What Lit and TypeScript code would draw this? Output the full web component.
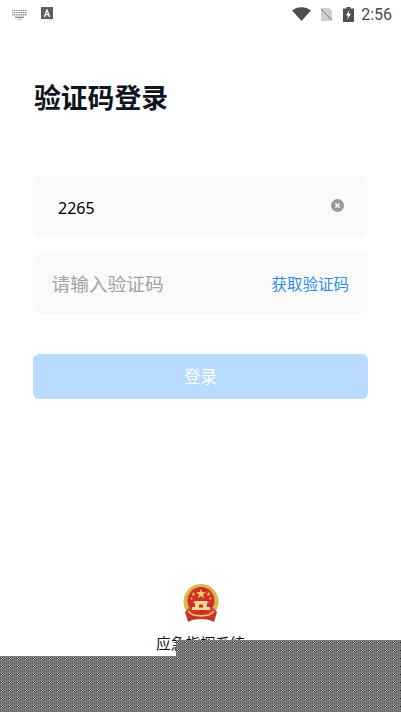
import { LitElement, html, css, svg } from "lit";
import { customElement } from "lit/decorators.js";

@customElement("app-root")
export class AppRoot extends LitElement {
  static styles = css`
    :host { display: block; width: 401px; height: 712px; position: relative; overflow: hidden; background: #fff; font-family: "Noto Sans CJK SC", "Noto Sans", sans-serif; }
    .status { height: 28px; display: flex; align-items: center; padding: 0 9px 0 11px; color: #555; }
    .status .left { display: flex; align-items: center; gap: 13px; flex: 1; }
    .status .right { display: flex; align-items: center; }
    .wifi { margin-right: 9px; }
    .sim { margin-right: 10px; }
    .batt { margin-right: 6px; }
    .time { font-family: Roboto, sans-serif; font-size: 16px; color: #4a4a4a; margin-left: 1px; }
    svg { display: block; }
    .main { padding: 50px 33px 0 33px; }
    h1 { margin: 0 0 0 1px; font-size: 26.8px; line-height: 38px; font-weight: 700; color: #0f1420; }
    .field { height: 61px; border-radius: 8px; background: #fafafa; display: flex; align-items: center; box-sizing: border-box; }
    .f1 { margin-top: 60px; padding: 0 24px 0 25px; justify-content: space-between; }
    .f2 { margin-top: 16px; padding: 0 19px 2px 19px; justify-content: space-between; }
    .value { font-family: "Noto Sans", sans-serif; font-size: 16px; color: #000; position: relative; top: 1px; }
    .clear { position: relative; top: -1px; }
    .ph { font-size: 18.7px; color: #a3a3a3; margin-left: -0.5px; }
    .link { font-size: 15.5px; color: #2b8ce8; }
    .btn { margin-top: 40px; height: 45px; padding-bottom: 2px; box-sizing: border-box; border-radius: 6px; background: #b8dbff; color: #fff; font-size: 16.5px; display: flex; align-items: center; justify-content: center; }
    .foot { position: absolute; left: 0; right: 0; top: 584px; display: flex; flex-direction: column; align-items: center; }
    .foot .name { margin-top: 8px; font-size: 14.8px; line-height: 22px; color: #111; }
    .noise { position: absolute; left: 0; top: 640px; }
  `;

  render() {
    return html`
      <div class="status">
        <div class="left">
          <svg width="17" height="11" viewBox="0 0 17 11">
            <g fill="none" stroke="#8c8c8c" stroke-width="1.2" stroke-dasharray="1.3 .5">
              <path d="M1 1.5 H16"/><path d="M1 3.7 H16"/><path d="M1 5.9 H16"/>
            </g>
            <path d="M4 8.3 H13" stroke="#8c8c8c" stroke-width="1.4"/>
            <path d="M6 10.3 H11" stroke="#b5b5b5" stroke-width="1"/>
          </svg>
          <svg width="12" height="14" viewBox="0 0 12 14"><rect width="12" height="12" fill="#5e5e5e"/><path d="M2.8 10 L5.3 2.6 H6.7 L9.2 10 H7.8 L7.3 8.3 H4.7 L4.2 10 Z M5.2 7.1 H6.8 L6 4.6 Z" fill="#fff" fill-rule="evenodd"/><path d="M6 13 H11" stroke="#aaa" stroke-width="1" stroke-dasharray="1 1"/></svg>
        </div>
        <div class="right">
          <svg class="wifi" width="19" height="14" viewBox="0 0 19 14"><path d="M0 3.5 C5 -1 14 -1 19 3.5 L9.5 14 Z" fill="#4f4f4f"/></svg>
          <svg class="sim" width="13" height="14" viewBox="0 0 13 14"><path d="M1 1 H9 L12 4 V14 H1 Z" fill="#cfcfcf"/><path d="M0 1 L13 13.5" stroke="#fff" stroke-width="1.4"/><path d="M1 2 L12 13" stroke="#8f8f8f" stroke-width="1.2"/></svg>
          <svg class="batt" width="11" height="15" viewBox="0 0 11 15"><path d="M3.5 0 H7.5 V1.5 H11 V15 H0 V1.5 H3.5 Z" fill="#4f4f4f"/><path d="M6.3 3 L3 8.5 H5 L4.4 12.5 L8 6.8 H5.8 Z" fill="#fff"/></svg>
          <span class="time">2:56</span>
        </div>
      </div>
      <div class="main">
        <h1>验证码登录</h1>
        <div class="field f1">
          <span class="value">2265</span>
          <svg class="clear" width="13" height="13" viewBox="0 0 13 13"><circle cx="6.5" cy="6.5" r="6.5" fill="#999"/><path d="M4.3 4.3 L8.7 8.7 M8.7 4.3 L4.3 8.7" stroke="#fff" stroke-width="1.3"/></svg>
        </div>
        <div class="field f2">
          <span class="ph">请输入验证码</span>
          <span class="link">获取验证码</span>
        </div>
        <div class="btn">登录</div>
      </div>
      <div class="foot">
        <svg width="36" height="40" viewBox="0 0 36 40">
          <ellipse cx="18" cy="17.5" rx="17.5" ry="17.5" fill="#d8b94f"/>
          <circle cx="18" cy="16.5" r="13.5" fill="#cf2f26"/>
          <path d="M2 28 L6 24 C11 31 25 31 30 24 L34 28 L31 38 C25 34 11 34 5 38 Z" fill="#c9332b"/>
          <path d="M5 27 C10 33.5 26 33.5 31 27" stroke="#eccb5e" stroke-width="1.6" fill="none"/>
          <path d="M18 4.5 L19.2 8.2 L23 8.2 L20 10.5 L21.1 14.2 L18 11.9 L14.9 14.2 L16 10.5 L13 8.2 L16.8 8.2 Z" fill="#f3d35b"/>
          <path d="M10.5 8 l.6 1.5 h1.6 l-1.3 1 .5 1.6 -1.4-1 -1.4 1 .5-1.6 -1.3-1 h1.6 Z" fill="#f3d35b"/>
          <path d="M25.5 8 l.6 1.5 h1.6 l-1.3 1 .5 1.6 -1.4-1 -1.4 1 .5-1.6 -1.3-1 h1.6 Z" fill="#f3d35b"/>
          <circle cx="8.5" cy="14.5" r="1" fill="#f3d35b"/><circle cx="27.5" cy="14.5" r="1" fill="#f3d35b"/>
          <path d="M12 17 L10 19 H26 L24 17 Z" fill="#f1dc9a"/>
          <path d="M12 19 H24 V23 H27 V26 H9 V23 H12 Z" fill="#f0d98f"/>
          <path d="M16 20.5 H20 V23.5 H16 Z" fill="#cf2f26"/>
        </svg>
        <div class="name">应急指挥系统</div>
      </div>
      <svg class="noise" width="401" height="72" viewBox="0 0 401 72" shape-rendering="crispEdges">
        <defs>
          <pattern id="dn" x="0" y="1" width="8" height="8" patternUnits="userSpaceOnUse">
            <rect width="8" height="8" fill="#747474"/>
            ${[0,2,4,6].flatMap(y=>[0,2,4,6].map(x=>svg`<rect x="${x}" y="${y}" width="1" height="1" fill="#6c6c6c"/><rect x="${x+1}" y="${y+1}" width="1" height="1" fill="#7e7e7e"/>`))}
            <rect x="1" y="0" width="1" height="1" fill="#e8e8e8"/><rect x="2" y="0" width="1" height="1" fill="#333"/>
            <rect x="0" y="1" width="1" height="1" fill="#333"/><rect x="1" y="1" width="1" height="1" fill="#111"/><rect x="2" y="1" width="1" height="1" fill="#e8e8e8"/>
            <rect x="1" y="2" width="1" height="1" fill="#e8e8e8"/><rect x="2" y="2" width="1" height="1" fill="#333"/>
          </pattern>
        </defs>
        <path d="M176 0 H401 V72 H0 V16 H176 Z" fill="url(#dn)"/>
      </svg>
    `;
  }
}
